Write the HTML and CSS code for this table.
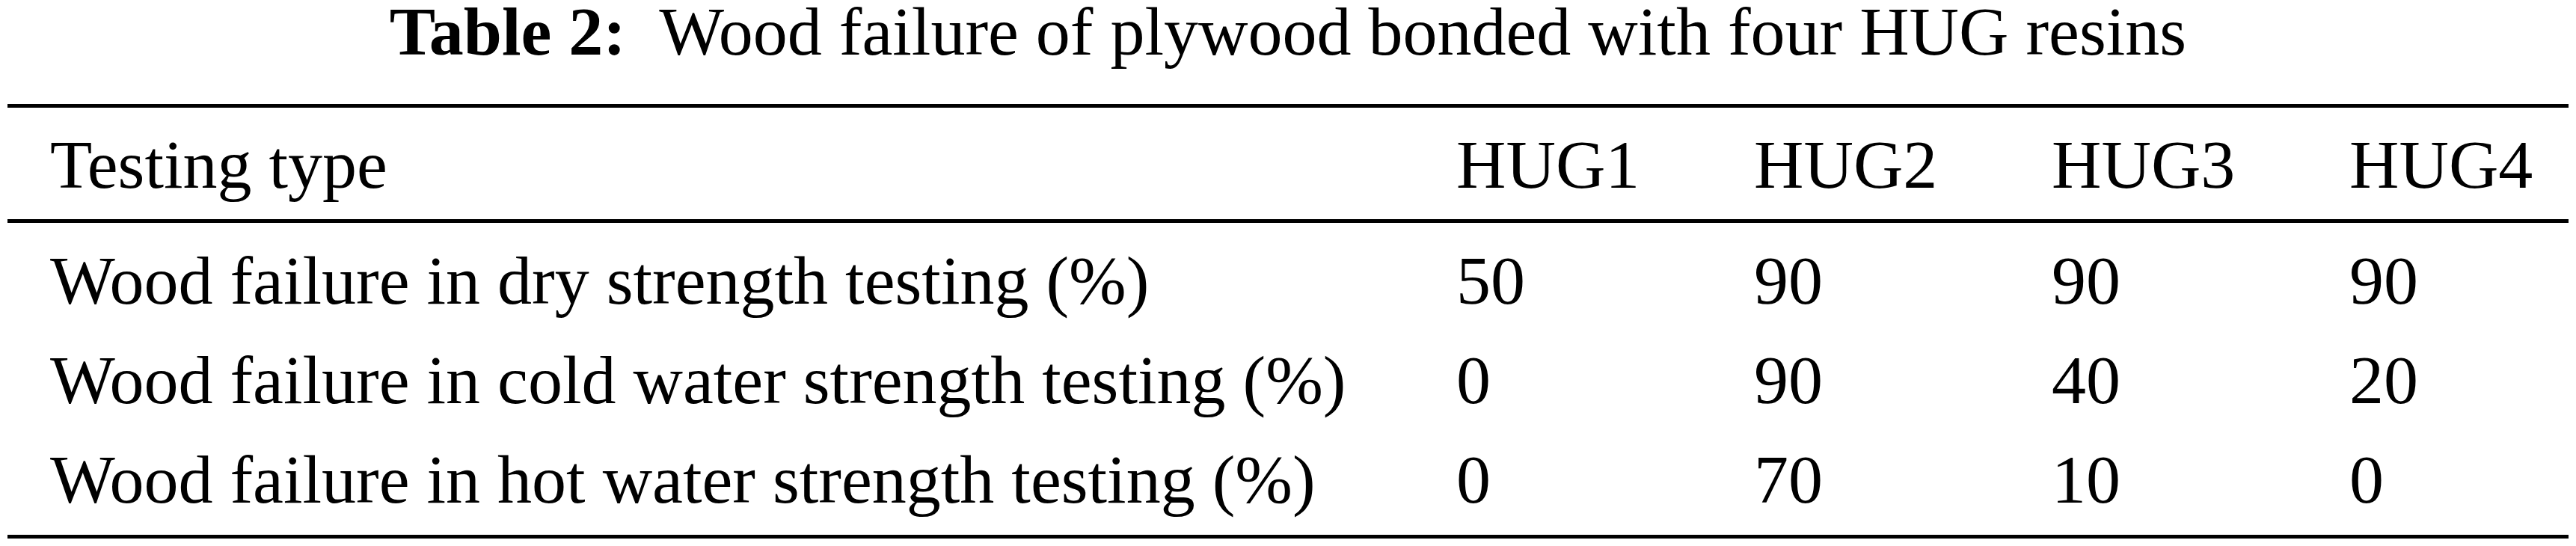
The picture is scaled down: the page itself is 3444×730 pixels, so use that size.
FILE: index.html
```html
<!DOCTYPE html>
<html lang="en">
<head>
  <meta charset="UTF-8" />
  <title>Table 2: Wood failure of plywood bonded with four HUG resins</title>
  <link rel="stylesheet" href="styles.css">
</head>
<body>
  <div class="page">
    <p class="caption"><b>Table 2:</b>&nbsp; Wood failure of plywood bonded with four HUG resins</p>
    <table class="data-table">
      <colgroup>
        <col class="col-type">
        <col class="col-hug">
        <col class="col-hug">
        <col class="col-hug">
        <col>
      </colgroup>
      <thead>
        <tr>
          <th>Testing type</th>
          <th>HUG1</th>
          <th>HUG2</th>
          <th>HUG3</th>
          <th>HUG4</th>
        </tr>
      </thead>
      <tbody>
        <tr>
          <td>Wood failure in dry strength testing (%)</td>
          <td>50</td>
          <td>90</td>
          <td>90</td>
          <td>90</td>
        </tr>
        <tr>
          <td>Wood failure in cold water strength testing (%)</td>
          <td>0</td>
          <td>90</td>
          <td>40</td>
          <td>20</td>
        </tr>
        <tr>
          <td>Wood failure in hot water strength testing (%)</td>
          <td>0</td>
          <td>70</td>
          <td>10</td>
          <td>0</td>
        </tr>
      </tbody>
    </table>
  </div>
</body>
</html>
```

FILE: styles.css
```css
* {
  margin: 0;
  padding: 0;
  box-sizing: border-box;
}

body {
  font-family: "Liberation Serif", "Times New Roman", serif;
  font-size: 92px;
  background-color: #fff;
  color: #000;
}

.page {
  padding: 0 10px;
}

.caption {
  line-height: 84px;
  margin-bottom: 55px;
  text-align: center;
  white-space: nowrap;
}

.caption b {
  font-weight: bold;
}

.data-table {
  width: 100%;
  table-layout: fixed;
  border-collapse: collapse;
}

.col-type {
  width: 1880px;
}

.col-hug {
  width: 398px;
}

.data-table th,
.data-table td {
  padding-left: 57px;
  text-align: left;
  font-weight: normal;
  white-space: nowrap;
}

.data-table thead tr {
  border-top: 5px solid #000;
  border-bottom: 5px solid #000;
}

.data-table th {
  line-height: 145px;
  padding-top: 4px;
}

.data-table td {
  line-height: 133px;
}

.data-table tbody tr:first-child td {
  padding-top: 11px;
}

.data-table tbody tr:last-child {
  border-bottom: 5px solid #000;
}

.data-table tbody tr:last-child td {
  padding-bottom: 7px;
}
```
